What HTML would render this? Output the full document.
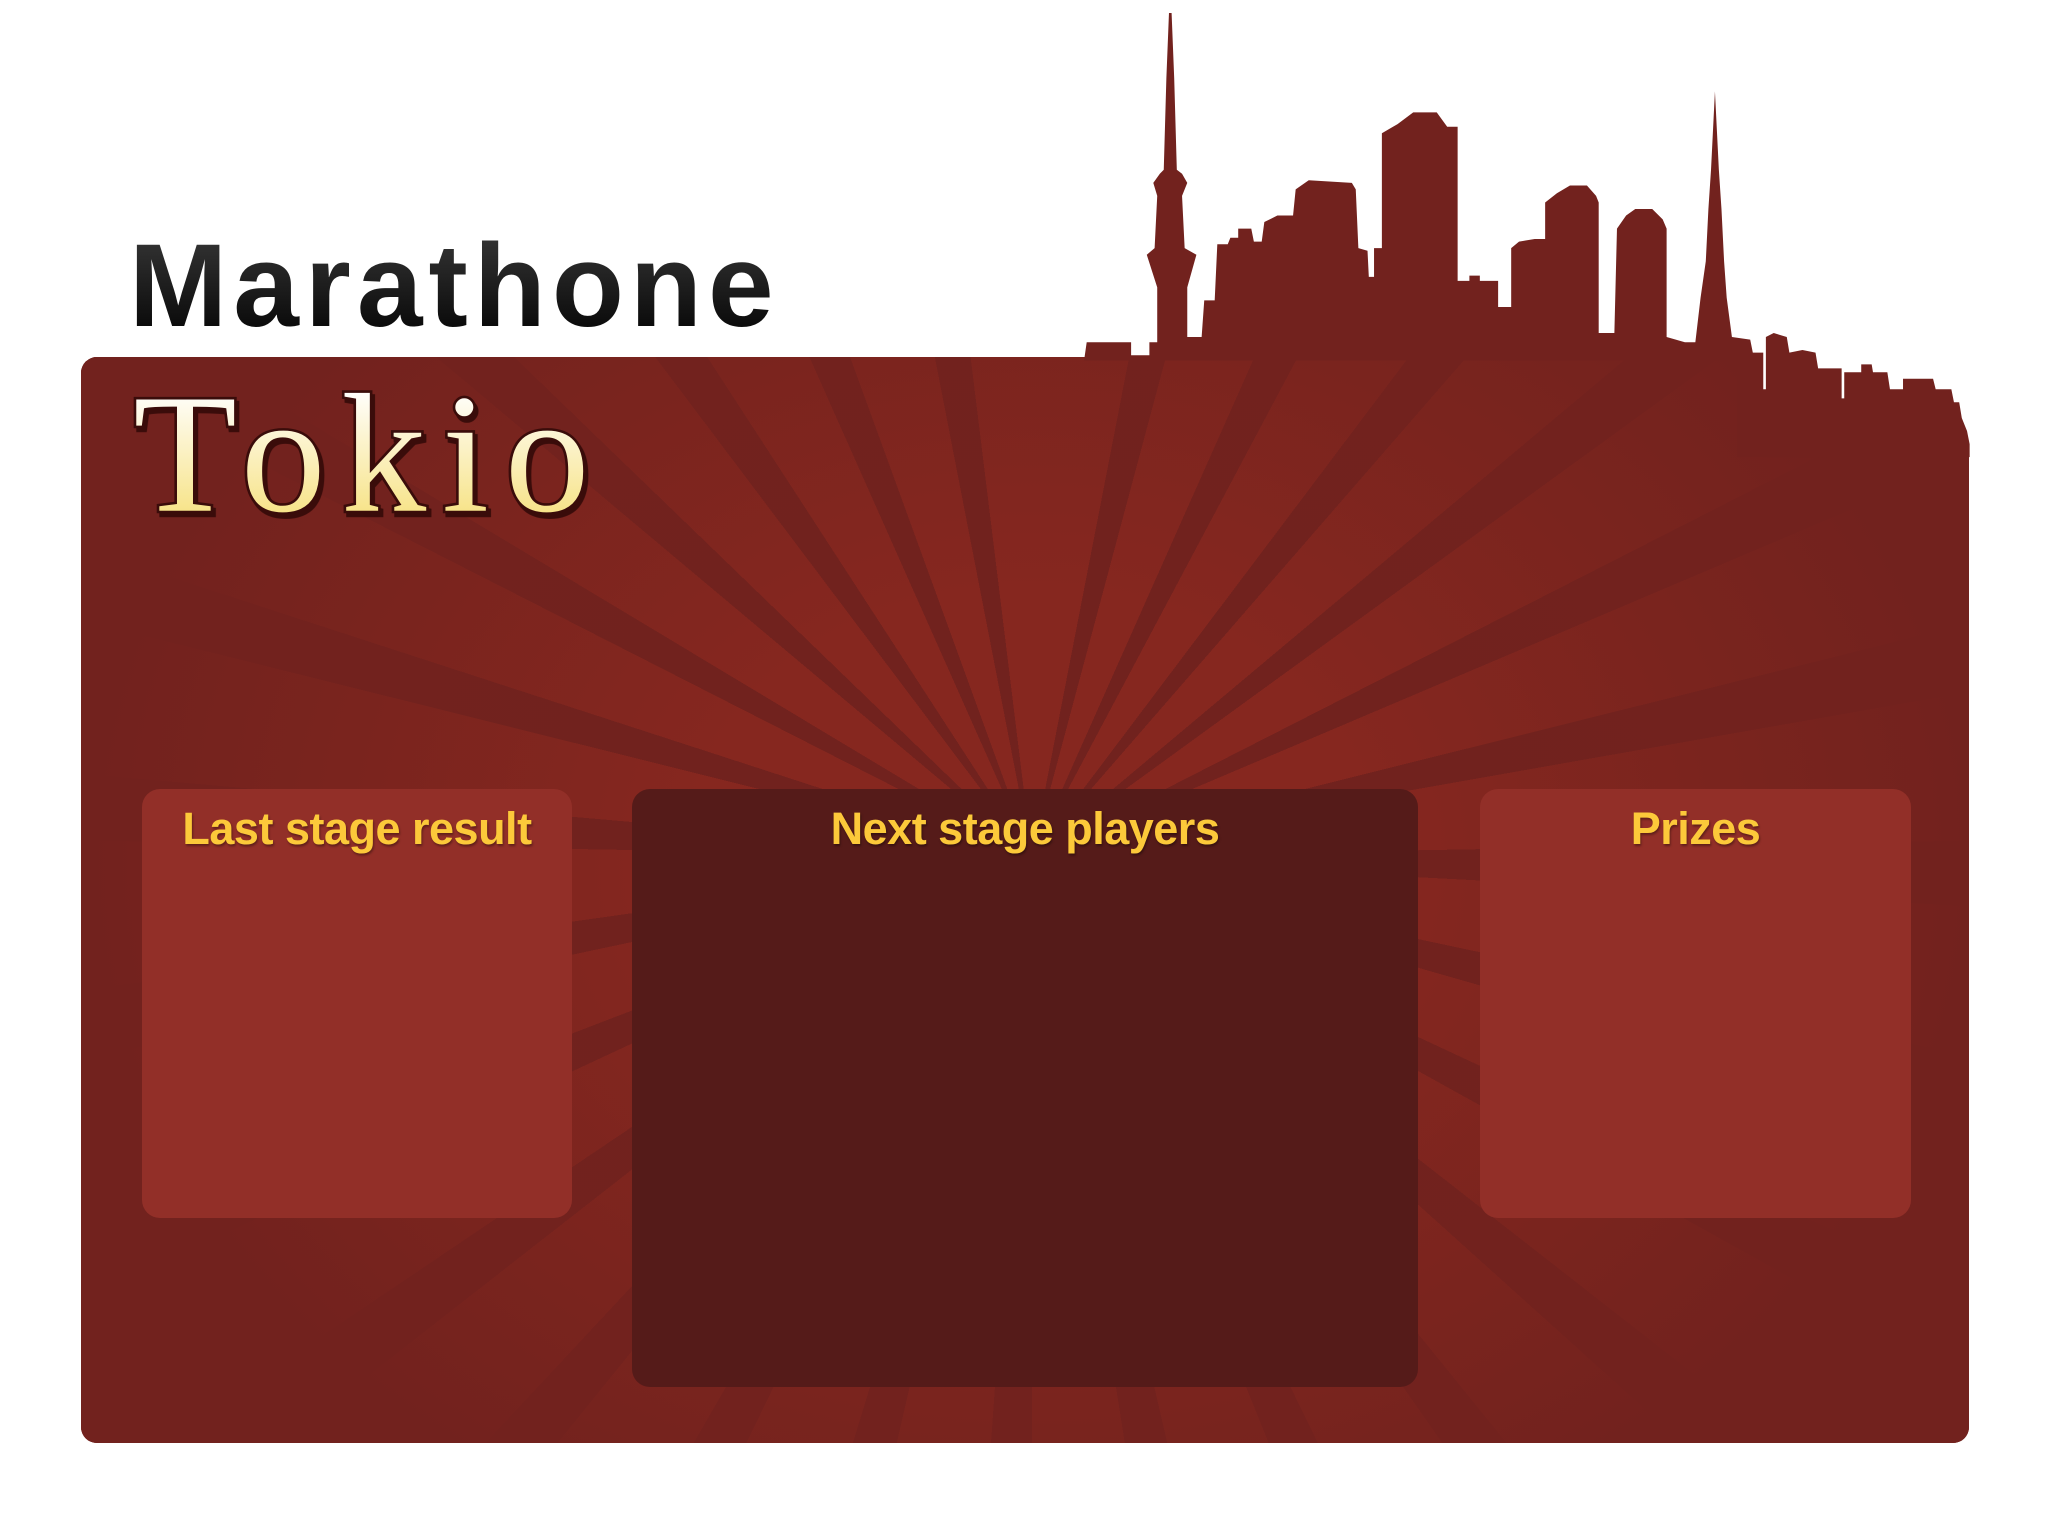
<!DOCTYPE html>
<html><head><meta charset="utf-8"><style>
html,body{margin:0;padding:0;background:#fff;}
body{width:2048px;height:1536px;position:relative;overflow:hidden;font-family:"Liberation Sans",sans-serif;}
.panel{position:absolute;left:81px;top:357px;width:1888px;height:1086px;border-radius:16px;overflow:hidden;background:#72221e;}
.rays{position:absolute;inset:0;background:repeating-conic-gradient(from 2deg at 951px 500px,#86271f 0deg 9deg,#71221e 9deg 13deg);}
.vign{position:absolute;inset:0;background:radial-gradient(ellipse 950px 750px at 951px 500px,rgba(114,34,30,0) 35%,rgba(114,34,30,0.55) 70%,rgba(114,34,30,1) 100%);}
.box{position:absolute;border-radius:18px;}
.box h2{margin:0;text-align:center;color:#fcc93a;font:bold 45px "Liberation Sans",sans-serif;padding-top:14px;text-shadow:1px 2px 2px rgba(0,0,0,.35);letter-spacing:-0.5px;}
.mar{position:absolute;left:129px;top:222px;font:bold 118px "Liberation Sans",sans-serif;letter-spacing:6px;color:#111;background:linear-gradient(#3a3a3a,#000);-webkit-background-clip:text;background-clip:text;-webkit-text-fill-color:transparent;line-height:1.1;}
svg{position:absolute;left:0;top:0;}
</style></head><body>
<div class="panel"><div class="rays"></div><div class="vign"></div></div>
<svg width="2048" height="1536" viewBox="0 0 1568 1176">
<defs><linearGradient id="g" x1="0" y1="0" x2="0" y2="1"><stop offset="0.15" stop-color="#ffffff"/><stop offset="0.9" stop-color="#f6e07a"/></linearGradient></defs>
<path fill="#fff" d="M1340,272 L1515,272 L1515,345 L1340,345 Z"/>
<path fill="#72221e" d="M830,276 L832,262 L866,262 L866,272 L880,272 L880,262 L886,262 L886,220 L878,195 L884,190 L886,150 L883,140 L888,133 L891,130 L893,60 L895,10 L897,10 L899,60 L901,130 L905,133 L909,140 L905,150 L907,190 L916,195 L909,220 L909,258 L920,258 L922,230 L930,230 L932,187 L940,187 L942,182 L948,182 L948,175 L958,175 L960,185 L966,185 L968,170 L978,165 L990,165 L992,145 L1002,138 L1035,140 L1038,145 L1040,190 L1047,192 L1048,212 L1052,212 L1052,190 L1058,190 L1058,102 L1070,95 L1082,86 L1100,86 L1108,97 L1116,97 L1116,215 L1125,215 L1125,211 L1133,211 L1133,215 L1147,215 L1147,235 L1157,235 L1157,190 L1163,185 L1175,183 L1183,183 L1183,155 L1192,148 L1202,142 L1215,142 L1222,150 L1224,155 L1224,255 L1236,255 L1238,175 L1245,165 L1252,160 L1265,160 L1273,168 L1276,175 L1276,258 L1290,262 L1298,262 L1302,228 L1306,200 L1308,160 L1310,130 L1312,90 L1313,70 L1314,90 L1316,130 L1318,160 L1320,200 L1322,228 L1326,258 L1340,260 L1342,270 L1350,270 L1350,298 L1352,298 L1352,258 L1358,255 L1368,258 L1370,270 L1380,268 L1390,270 L1392,282 L1410,282 L1410,305 L1412,305 L1412,285 L1425,285 L1425,279 L1433,279 L1434,285 L1445,285 L1447,298 L1457,298 L1457,290 L1480,290 L1482,298 L1494,298 L1496,308 L1500,308 L1502,320 L1506,330 L1508,340 L1508,350 L1330,350 L1330,276 Z"/>
<text x="102" y="391" font-family="Liberation Serif, serif" font-size="130" letter-spacing="12" fill="url(#g)" stroke="#3a0c0a" stroke-width="4" paint-order="stroke" style="filter:drop-shadow(2px 3px 0 #3a0c0a)">Tokio</text>
</svg>
<div class="mar">Marathone</div>
<div class="box" style="left:142px;top:789px;width:430px;height:429px;background:#922f28;"><h2>Last stage result</h2></div>
<div class="box" style="left:632px;top:789px;width:786px;height:598px;background:#551b19;"><h2>Next stage players</h2></div>
<div class="box" style="left:1480px;top:789px;width:431px;height:429px;background:#922f28;"><h2>Prizes</h2></div>
</body></html>
